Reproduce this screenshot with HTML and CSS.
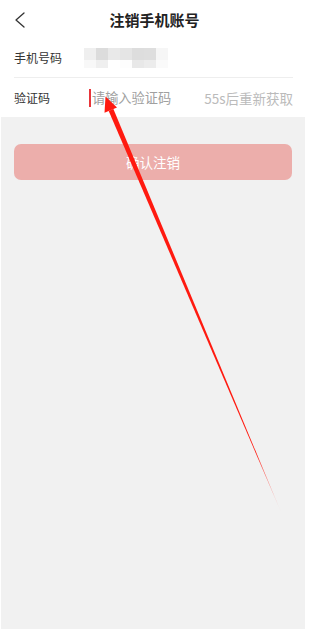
FILE: index.html
```html
<!DOCTYPE html>
<html lang="zh">
<head>
<meta charset="utf-8">
<title>注销手机账号</title>
<link rel="stylesheet" href="styles.css">
</head>
<body>
<div class="page">
  <header class="nav">
    <svg class="back" width="12" height="18" viewBox="0 0 12 18"><path d="M10 1 L2 8 L10 15" fill="none" stroke="#333" stroke-width="1.3" stroke-linecap="round" stroke-linejoin="round"/></svg>
    <h1 class="title">注销手机账号</h1>
  </header>
  <div class="form">
    <div class="row row-border">
      <span class="label">手机号码</span>
      <div class="blur">
        <i class="c a1"></i><i class="c a2"></i><i class="c a3"></i><i class="c a4"></i><i class="c a5"></i><i class="c a6"></i><i class="c a7"></i>
        <i class="c b1 s"></i><i class="c b2 s"></i><i class="c b3 s"></i><i class="c b4 s"></i><i class="c b5 s"></i><i class="c b6 s"></i><i class="c b7 s"></i>
      </div>
    </div>
    <div class="row">
      <span class="label">验证码</span>
      <div class="input"><span class="cursor"></span><span class="placeholder">请输入验证码</span></div>
      <span class="timer">55s后重新获取</span>
    </div>
  </div>
  <main class="body">
    <button class="confirm">确认注销</button>
  </main>
  <svg class="arrow" width="309" height="630" viewBox="0 0 309 630">
    <defs>
      <linearGradient id="fade" gradientUnits="userSpaceOnUse" x1="111" y1="110" x2="281" y2="512">
        <stop offset="0" stop-color="#ff1a10"/>
        <stop offset="0.85" stop-color="#ff1a10"/>
        <stop offset="1" stop-color="#ff1a10" stop-opacity="0.1"/>
      </linearGradient>
    </defs>
    <polygon points="113.3,108.8 108.7,110.9 281,512" fill="url(#fade)"/>
    <polygon points="105.5,96.5 117,107.5 104.5,112.8" fill="#ff1a10"/>
  </svg>
</div>
</body>
</html>
```

FILE: styles.css
```css
html, body {
  margin: 0;
  padding: 0;
  background: #fff;
}
body {
  font-family: "Noto Sans CJK SC", "Noto Sans", sans-serif;
  color: #333;
}
.page {
  position: relative;
  width: 309px;
  height: 630px;
  display: flex;
  flex-direction: column;
  overflow: hidden;
}
.nav {
  height: 38px;
  display: flex;
  align-items: center;
  justify-content: center;
  position: relative;
}
.back {
  position: absolute;
  left: 14px;
  top: 12px;
}
.title {
  margin: 0;
  font-size: 15px;
  font-weight: 700;
  color: #222;
  line-height: 20px;
  padding-top: 1px;
}
.form {
  padding: 0 16px 0 14px;
}
.row {
  height: 39px;
  display: flex;
  align-items: center;
}
.row-border {
  border-bottom: 1px solid #eeeeee;
}
.label {
  width: 75px;
  font-size: 12px;
  color: #333;
}
.blur {
  margin-left: -5px;
  display: grid;
  grid-template-columns: repeat(7, 12px);
  grid-template-rows: 12px 8px;
}
.c { display: block; }
.a1 { background: #efefef; }
.a2 { background: #dcdcdc; }
.a3 { background: #e9e9e9; }
.a4 { background: #e5e5e5; }
.a5 { background: #dddddd; }
.a6 { background: #dedede; }
.a7 { background: #f6f6f6; }
.b1 { background: #f8f8f8; }
.b2 { background: #efefef; }
.b3 { background: #ffffff; }
.b4 { background: #fdfdfd; }
.b5 { background: #e8e8e8; }
.b6 { background: #ececec; }
.b7 { background: #fafafa; }
.input {
  flex: 1;
  display: flex;
  align-items: center;
}
.cursor {
  width: 2px;
  height: 18px;
  background: #e8353a;
  margin-right: 1px;
}
.placeholder {
  font-size: 13.2px;
  color: #a0a0a0;
}
.timer {
  font-size: 13.5px;
  color: #bbbbbb;
}
.body {
  flex: 1;
  background: #f1f1f1;
  margin: 0 4px 1px 1px;
  padding: 27px 13px 0 13px;
}
.confirm {
  display: block;
  width: 100%;
  height: 36px;
  border: none;
  border-radius: 7px;
  background: #ecaeab;
  color: #fff;
  font-family: inherit;
  font-size: 13.5px;
  padding: 0;
}
.arrow {
  position: absolute;
  left: 0;
  top: 0;
  pointer-events: none;
}
```
